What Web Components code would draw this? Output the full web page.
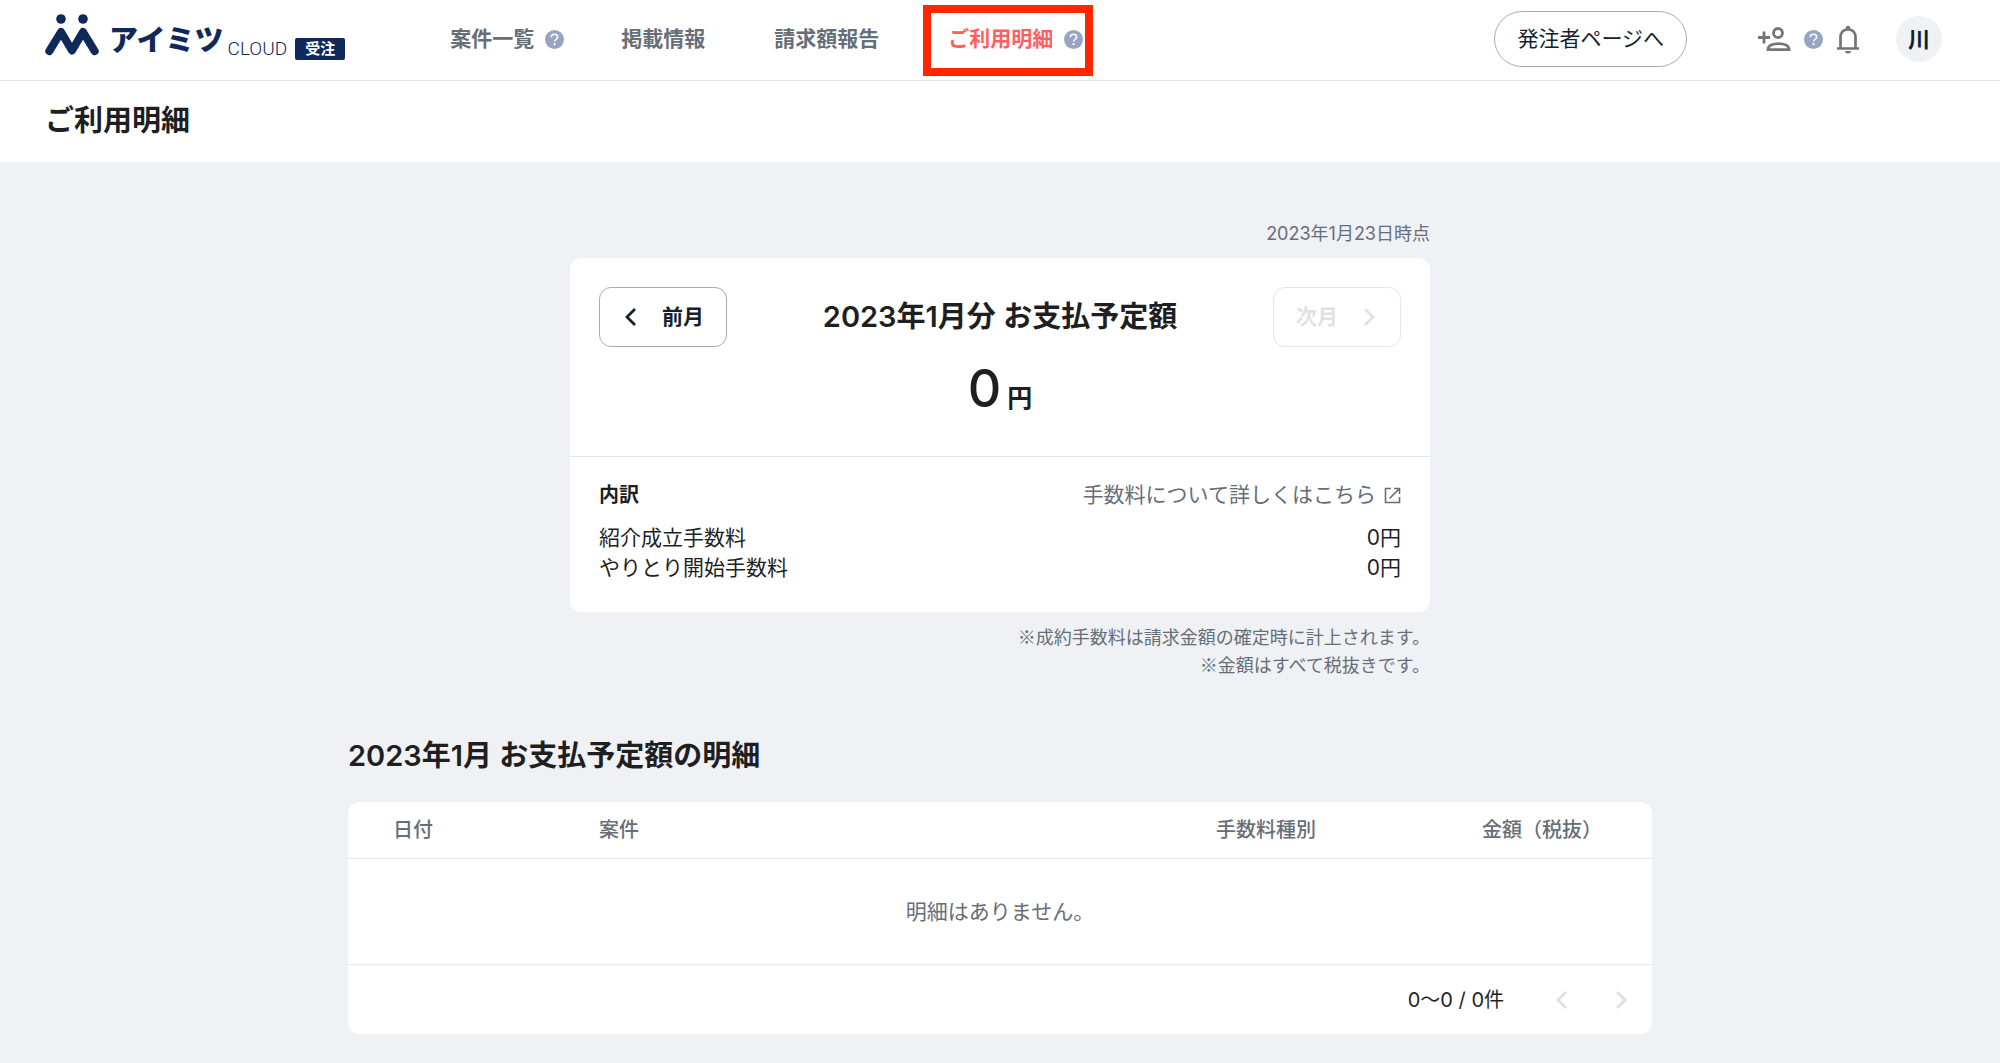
<!DOCTYPE html>
<html lang="ja">
<head>
  <meta charset="UTF-8">
  <meta name="viewport" content="width=device-width, initial-scale=1">
  <title>ご利用明細</title>
  <style>
    :root {
      --navy: #0f2a5a;
      --ink: #1f1f1f;
      --muted: #666e78;
      --line: #e4e5e7;
      --coral: #ff5f5f;
    }
    body {
      margin: 0;
      min-height: 100vh;
      background: #eff1f5;
      color: var(--ink);
      font-family: Inter, "Noto Sans CJK JP", sans-serif;
      font-size: 20px;
      line-height: 30px;
    }
    main {
      display: flex;
      flex-direction: column;
      gap: 56px;
      max-width: 1304px;
      margin: 0 auto;
      padding: 58px 24px 24px;
    }
    .note {
      margin: 0;
      font-family: "Noto Sans CJK JP", sans-serif;
    }
  </style>
</head>
<body>
  <app-header>
    <nav-item slot="nav" help>案件一覧</nav-item>
    <nav-item slot="nav">掲載情報</nav-item>
    <nav-item slot="nav">請求額報告</nav-item>
    <nav-item slot="nav" help active marked>ご利用明細</nav-item>
  </app-header>
  <page-title>ご利用明細</page-title>
  <main>
    <payment-summary date="2023年1月23日時点" month="2023年1月分 お支払予定額" amount="0">
      <fee-row label="紹介成立手数料">0円</fee-row>
      <fee-row label="やりとり開始手数料">0円</fee-row>
      <p class="note" slot="notes">※成約手数料は請求金額の確定時に計上されます。</p>
      <p class="note" slot="notes">※金額はすべて税抜きです。</p>
    </payment-summary>
    <payment-details heading="2023年1月 お支払予定額の明細"></payment-details>
  </main>

  <script>
    class BaseElement extends HTMLElement {
      constructor() {
        super();
        this.attachShadow({ mode: 'open' });
      }

      connectedCallback() {
        this.render();
      }
    }

    class HelpIcon extends BaseElement {
      render() {
        this.shadowRoot.innerHTML = `
          <style>
            :host { display: inline-flex; flex: none; }
            svg { width: 19px; height: 19px; }
          </style>
          <svg viewBox="0 0 19 19" aria-hidden="true">
            <circle cx="9.5" cy="9.5" r="9.5" fill="#98a4c4"/>
            <path d="M6.3 7.2c0-1.9 1.4-3 3.2-3s3.2 1.1 3.2 2.8c0 2.2-3.1 2.3-3.1 4.6" fill="none" stroke="#fff" stroke-width="1.5"/>
            <circle cx="9.6" cy="14.2" r="1.1" fill="#fff"/>
          </svg>
        `;
      }
    }

    class ChevronIcon extends BaseElement {
      render() {
        const d = this.getAttribute('dir') === 'right' ? 'M5 3l8 8-8 8' : 'M13 3l-8 8 8 8';
        this.shadowRoot.innerHTML = `
          <style>
            :host { display: inline-flex; flex: none; }
            svg { width: 18px; height: 22px; }
          </style>
          <svg viewBox="0 0 18 22" aria-hidden="true">
            <path d="${d}" fill="none" stroke="currentColor" stroke-width="2.8"/>
          </svg>
        `;
      }
    }

    class BrandLogo extends BaseElement {
      render() {
        this.shadowRoot.innerHTML = `
          <style>
            :host { display: block; flex: none; color: var(--navy); }
            a { display: flex; align-items: flex-end; height: 42px; color: inherit; text-decoration: none; }
            svg { width: 54px; height: 42px; margin-bottom: 4px; }
            .name { margin-left: 10px; font-size: 29px; font-weight: 800; line-height: 38px; }
            .cloud { margin-left: 4px; font-family: Roboto, sans-serif; font-size: 19px; font-weight: 300; line-height: 22px; }
            .badge {
              margin-left: 8px;
              padding: 0 10px;
              border-radius: 2px;
              background: var(--navy);
              color: #fff;
              font-size: 15px;
              font-weight: 700;
              line-height: 22px;
            }
          </style>
          <a href="#">
            <svg viewBox="0 0 54 42" aria-hidden="true">
              <g fill="currentColor"><circle cx="16" cy="5" r="4.8"/><circle cx="38" cy="5" r="4.8"/></g>
              <path d="M4.3 37.2L16 18l11 18.5L38 18l11.7 19.2" fill="none" stroke="currentColor" stroke-width="8" stroke-linecap="round" stroke-linejoin="round"/>
            </svg>
            <span class="name">アイミツ</span>
            <span class="cloud">CLOUD</span>
            <span class="badge">受注</span>
          </a>
        `;
      }
    }

    class NavItem extends BaseElement {
      render() {
        this.shadowRoot.innerHTML = `
          <style>
            :host { position: relative; display: flex; align-items: center; gap: 11px; padding-right: 12px; color: var(--muted); }
            :host([help]) { padding-right: 0; }
            :host([active]) { color: var(--coral); }
            :host([marked])::after {
              content: "";
              position: absolute;
              inset: -19px -10px -22px -25px;
              border: 8px solid #ff2600;
              pointer-events: none;
            }
            a { color: inherit; font-size: 21px; font-weight: 700; text-decoration: none; white-space: nowrap; }
          </style>
          <a href="#"><slot></slot></a>
          ${this.hasAttribute('help') ? '<help-icon></help-icon>' : ''}
        `;
      }
    }

    class AppHeader extends BaseElement {
      render() {
        this.shadowRoot.innerHTML = `
          <style>
            :host { display: block; background: #fff; border-bottom: 1px solid var(--line); }
            header { display: flex; align-items: center; height: 80px; padding: 0 58px 2px 45px; box-sizing: border-box; }
            nav { display: flex; gap: 57px; margin-left: 105px; }
            .tools { display: flex; align-items: center; margin-left: auto; }
            button { padding: 0; border: 0; background: none; color: #757575; font: inherit; cursor: pointer; }
            .switch {
              padding: 0 22px;
              border: 1px solid #a9abae;
              border-radius: 28px;
              background: #fff;
              color: #13202d;
              font-size: 21px;
              line-height: 54px;
              text-decoration: none;
              white-space: nowrap;
            }
            .icons { display: flex; align-items: center; gap: 13px; margin: 0 36px 0 70px; }
            .icons button { display: flex; }
            .avatar { width: 46px; height: 46px; border-radius: 50%; background: #eff1f5; color: #13202d; font-size: 22px; font-weight: 700; }
          </style>
          <header>
            <brand-logo></brand-logo>
            <nav><slot name="nav"></slot></nav>
            <div class="tools">
              <a class="switch" href="#">発注者ページへ</a>
              <div class="icons">
                <button type="button" aria-label="メンバーを追加">
                  <svg width="34" height="26" viewBox="0 0 34 26" fill="none" stroke="currentColor" stroke-width="2.8">
                    <path d="M1 11.5h12M7 5.5v12"/>
                    <circle cx="21" cy="7" r="4.5"/>
                    <path d="M11 23.6c0-4 5-6 10.500-6s10.500 2 10.500 6z"/>
                  </svg>
                </button>
                <help-icon></help-icon>
                <button type="button" aria-label="お知らせ">
                  <svg width="24" height="29" viewBox="0 0 24 29">
                    <path d="M4.500 23V12.500C4.500 7.500 7.500 4.300 12 4.300s7.500 3.200 7.500 8.200V23M1 23.500h22" fill="none" stroke="currentColor" stroke-width="2.700"/>
                    <circle cx="12" cy="3" r="2.300" fill="currentColor"/>
                    <path d="M9 26h6a3 2.500 0 0 1-6 0z" fill="currentColor"/>
                  </svg>
                </button>
              </div>
              <button class="avatar" type="button">川</button>
            </div>
          </header>
        `;
      }
    }

    class PageTitle extends BaseElement {
      render() {
        this.shadowRoot.innerHTML = `
          <style>
            :host { display: block; padding: 18px 45px 19px; background: #fff; }
            h1 { margin: 0; font-size: 29px; font-weight: 600; line-height: 44px; }
          </style>
          <h1><slot></slot></h1>
        `;
      }
    }

    class FeeRow extends BaseElement {
      render() {
        this.shadowRoot.innerHTML = `
          <style>
            :host { display: flex; justify-content: space-between; font-size: 21px; }
          </style>
          <span>${this.getAttribute('label')}</span>
          <span><slot></slot></span>
        `;
      }
    }

    class PaymentSummary extends BaseElement {
      render() {
        this.shadowRoot.innerHTML = `
          <style>
            :host { display: block; width: 100%; max-width: 860px; margin: 0 auto; }
            .small { color: var(--muted); font-size: 18px; line-height: 28px; text-align: right; }
            .card { margin: 10px 0; border-radius: 12px; background: #fff; }
            .total { padding: 29px 29px 28px; border-bottom: 1px solid var(--line); }
            .month { display: flex; align-items: center; justify-content: space-between; }
            h2 { margin: 0; font-size: 29px; font-weight: 600; line-height: 44px; }
            button {
              display: flex;
              align-items: center;
              justify-content: center;
              gap: 22px;
              width: 128px;
              height: 60px;
              padding: 0;
              border: 1px solid #a9abae;
              border-radius: 12px;
              background: #fff;
              color: #13202d;
              font: inherit;
              font-size: 21px;
              font-weight: 700;
            }
            button:disabled { border-color: var(--line); color: #e0e1e3; }
            .amount { margin: 12px 0 0; font-size: 25px; font-weight: 600; line-height: 60px; text-align: center; }
            .amount b { margin-right: 6px; font-size: 52px; font-weight: 500; }
            .detail { padding: 23px 29px 29px; }
            .head { display: flex; justify-content: space-between; margin-bottom: 13px; }
            h3 { margin: 0; font-size: 20px; font-weight: 700; line-height: 30px; }
            a { display: flex; align-items: center; gap: 8px; color: var(--muted); font-size: 21px; text-decoration: none; }
          </style>
          <div class="small">${this.getAttribute('date')}</div>
          <section class="card">
            <div class="total">
              <div class="month">
                <button type="button"><chevron-icon dir="left"></chevron-icon>前月</button>
                <h2>${this.getAttribute('month')}</h2>
                <button type="button" disabled>次月<chevron-icon dir="right"></chevron-icon></button>
              </div>
              <p class="amount"><b>${this.getAttribute('amount')}</b>円</p>
            </div>
            <div class="detail">
              <div class="head">
                <h3>内訳</h3>
                <a href="#">手数料について詳しくはこちら
                  <svg width="17" height="17" viewBox="0 0 17 17" fill="none" stroke="currentColor" stroke-width="1.600" aria-hidden="true">
                    <path d="M7 1.500H1.500v14h14V10M10 1.500h5.500V7M15.500 1.500L5.500 11.500"/>
                  </svg>
                </a>
              </div>
              <slot></slot>
            </div>
          </section>
          <div class="small"><slot name="notes"></slot></div>
        `;
      }
    }

    class PaymentDetails extends BaseElement {
      render() {
        this.shadowRoot.innerHTML = `
          <style>
            :host { display: block; }
            h2 { margin: 0 0 24px; font-size: 29px; font-weight: 600; line-height: 44px; }
            .panel { border-radius: 12px; background: #fff; }
            table { width: 100%; border-collapse: collapse; table-layout: fixed; color: var(--muted); }
            th { height: 56px; padding: 0 0 0 45px; font-size: 20px; font-weight: 500; text-align: left; }
            td { height: 105px; padding: 0; font-size: 21px; text-align: center; }
            tr { border-bottom: 1px solid var(--line); }
            .date { width: 161px; }
            .kind { width: 221px; }
            .price { width: 170px; }
            .pager { display: flex; align-items: center; justify-content: flex-end; height: 69px; padding-right: 22px; }
            .pager button { display: flex; padding: 0; border: 0; background: none; color: #dedfe1; }
            .pager button:first-of-type { margin: 0 41px 0 49px; }
          </style>
          <h2>${this.getAttribute('heading')}</h2>
          <section class="panel">
            <table>
              <thead>
                <tr>
                  <th class="date">日付</th>
                  <th>案件</th>
                  <th class="kind">手数料種別</th>
                  <th class="price">金額（税抜）</th>
                </tr>
              </thead>
              <tbody>
                <tr><td colspan="4">明細はありません。</td></tr>
              </tbody>
            </table>
            <div class="pager">
              <span>0〜0 / 0件</span>
              <button type="button" disabled aria-label="前のページ"><chevron-icon dir="left"></chevron-icon></button>
              <button type="button" disabled aria-label="次のページ"><chevron-icon dir="right"></chevron-icon></button>
            </div>
          </section>
        `;
      }
    }

    customElements.define('help-icon', HelpIcon);
    customElements.define('chevron-icon', ChevronIcon);
    customElements.define('brand-logo', BrandLogo);
    customElements.define('nav-item', NavItem);
    customElements.define('app-header', AppHeader);
    customElements.define('page-title', PageTitle);
    customElements.define('fee-row', FeeRow);
    customElements.define('payment-summary', PaymentSummary);
    customElements.define('payment-details', PaymentDetails);
  </script>
</body>
</html>
